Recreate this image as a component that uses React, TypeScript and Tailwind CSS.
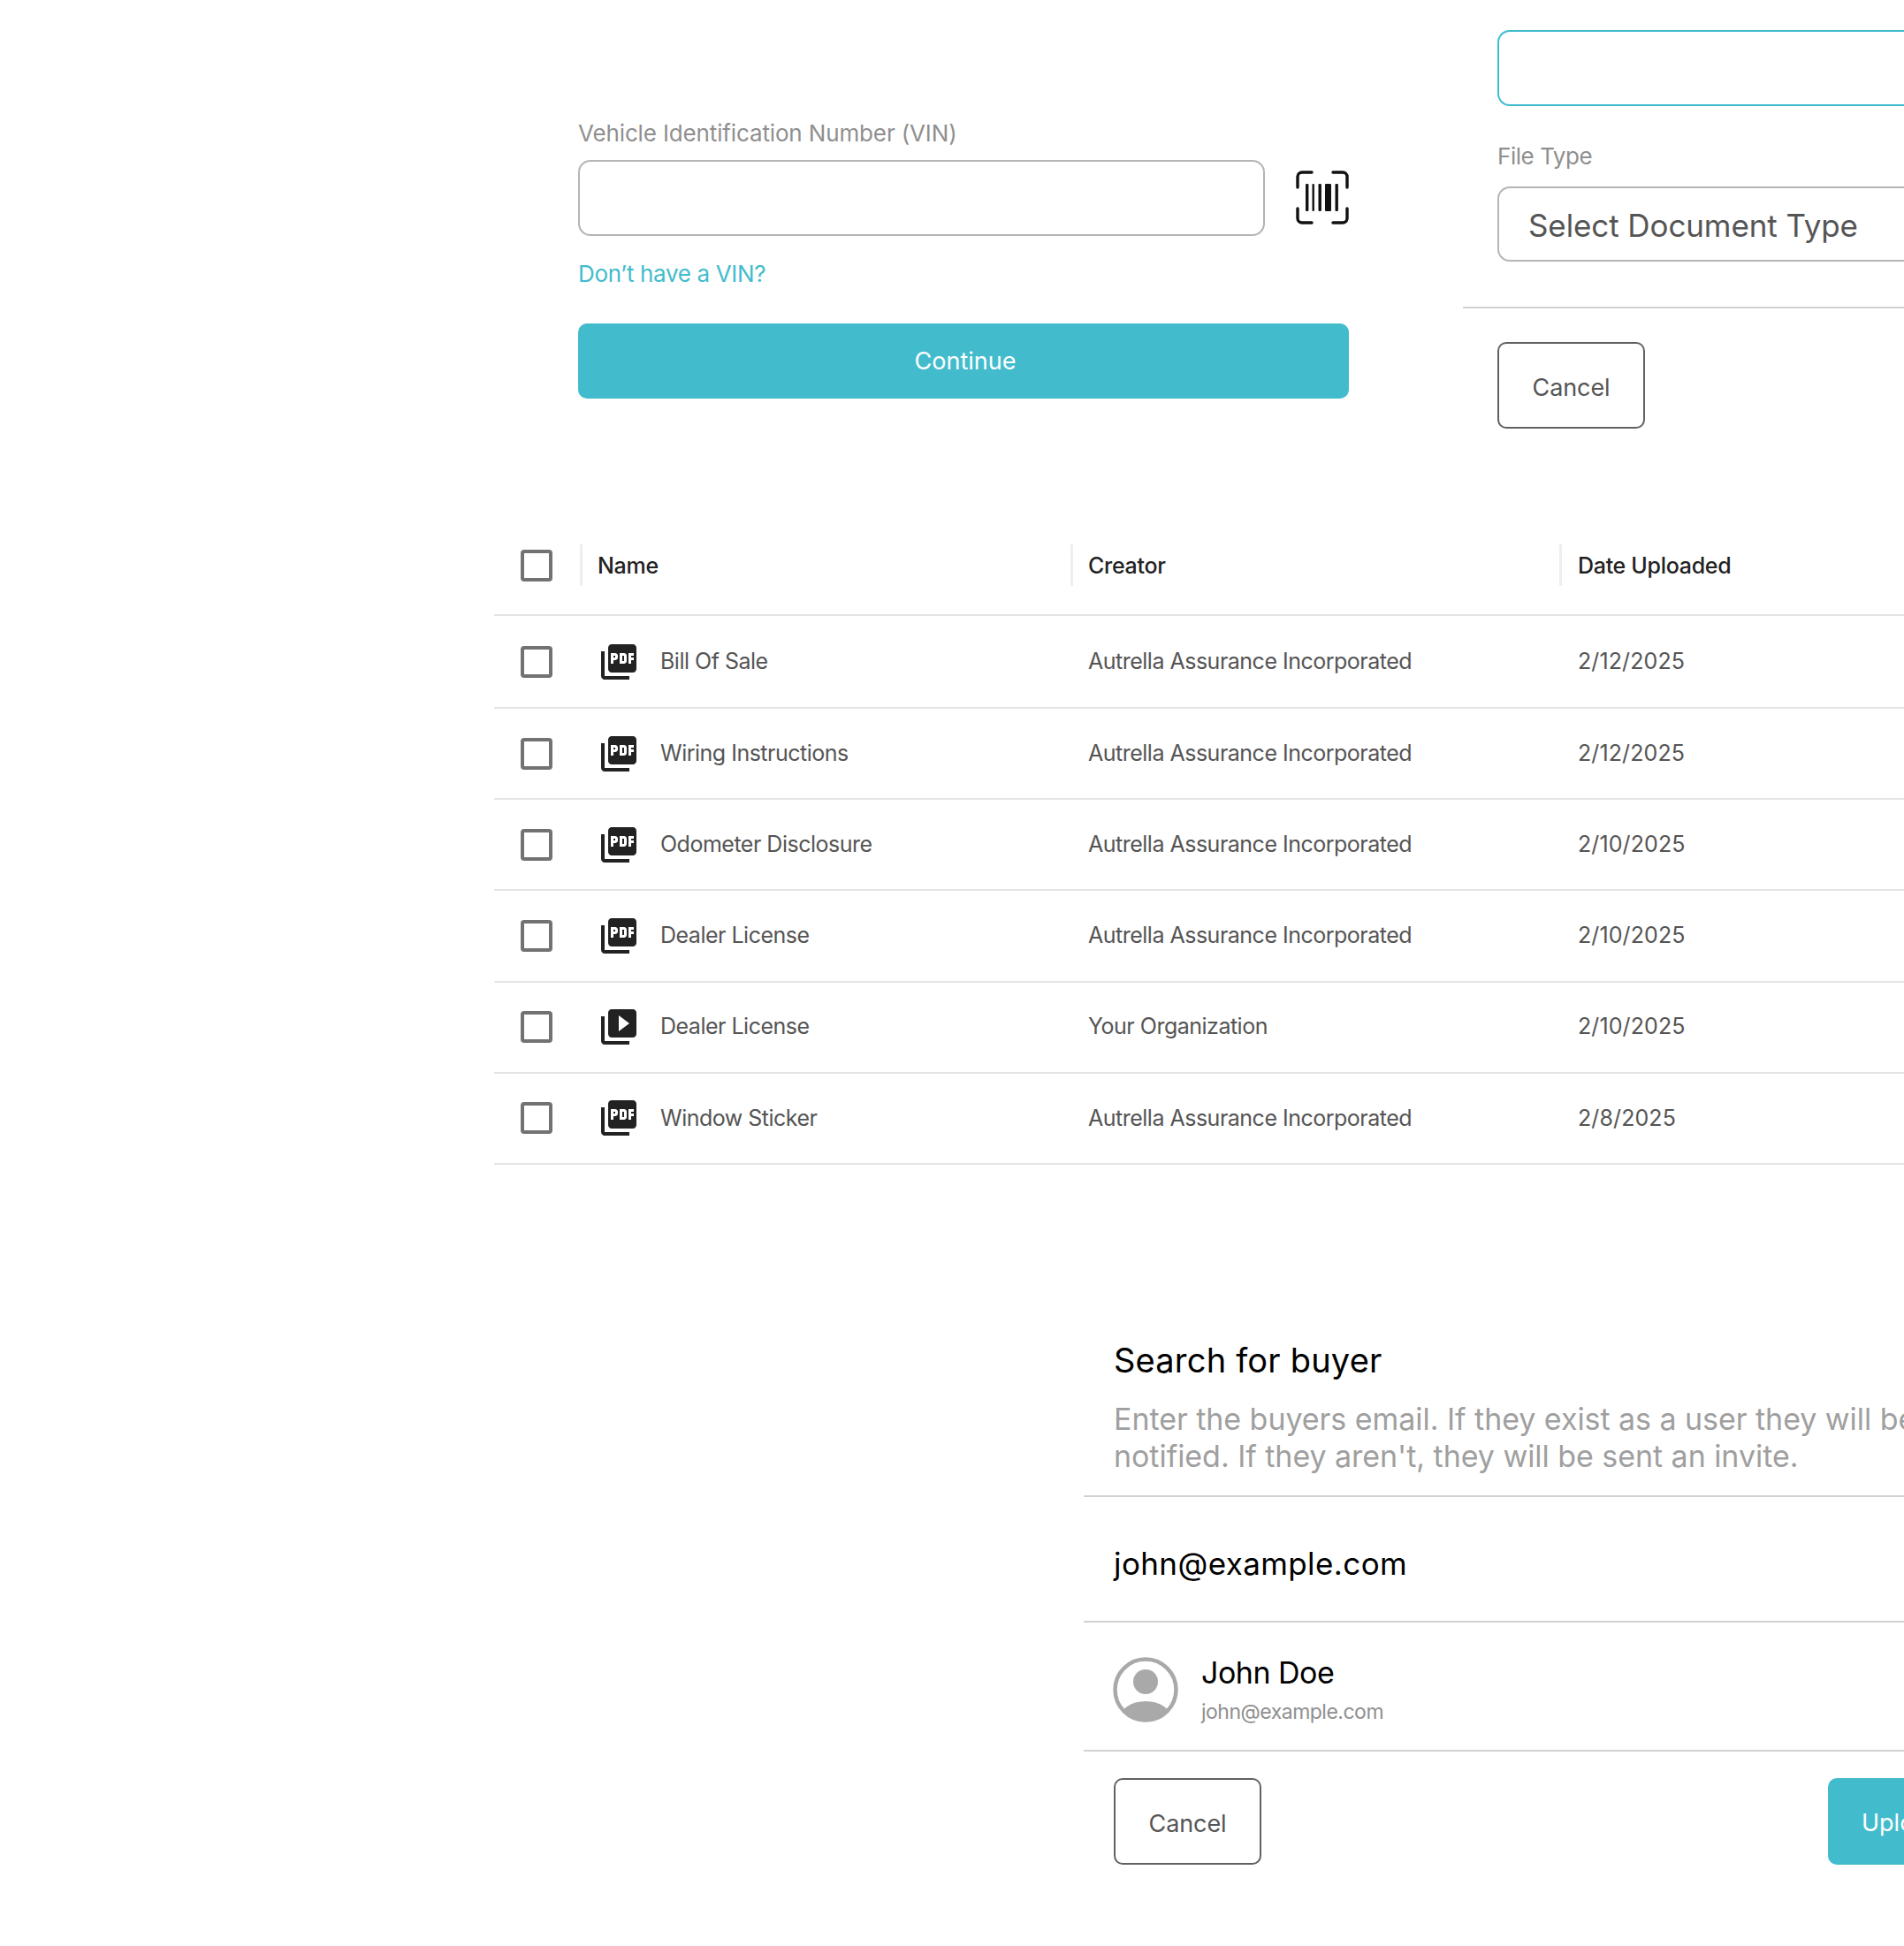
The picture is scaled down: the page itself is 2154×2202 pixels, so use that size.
import { MdPictureAsPdf, MdVideoLibrary } from "react-icons/md";

const rows = [
  { name: "Bill Of Sale", creator: "Autrella Assurance Incorporated", date: "2/12/2025", video: false },
  { name: "Wiring Instructions", creator: "Autrella Assurance Incorporated", date: "2/12/2025", video: false },
  { name: "Odometer Disclosure", creator: "Autrella Assurance Incorporated", date: "2/10/2025", video: false },
  { name: "Dealer License", creator: "Autrella Assurance Incorporated", date: "2/10/2025", video: false },
  { name: "Dealer License", creator: "Your Organization", date: "2/10/2025", video: true },
  { name: "Window Sticker", creator: "Autrella Assurance Incorporated", date: "2/8/2025", video: false },
];

function Check() {
  return <div className="ml-[30px] w-9 h-9 border-4 border-[#727272] rounded-[4px] bg-white" />;
}

function Barcode() {
  return (
    <svg width="62" height="62" viewBox="-1 1 62 62" fill="none" stroke="#111" strokeWidth="3.4" strokeLinecap="round">
      <path d="M3 20V8a5 5 0 0 1 5-5h11" />
      <path d="M43 3h11a5 5 0 0 1 5 5v12" />
      <path d="M3 44v11a5 5 0 0 0 5 5h11" />
      <path d="M43 60h11a5 5 0 0 0 5-5V44" />
      <g stroke="none" fill="#111">
        <rect x="12" y="16" width="3.4" height="31" rx="1.2" />
        <rect x="19.5" y="16" width="2.4" height="31" rx="1" />
        <rect x="26.5" y="16" width="3.4" height="31" rx="1.2" />
        <rect x="34" y="16" width="7" height="31" rx="1" />
        <rect x="45.5" y="16" width="3.4" height="31" rx="1.2" />
      </g>
    </svg>
  );
}

function Avatar() {
  return (
    <svg width="74" height="74" viewBox="0 0 74 74">
      <defs>
        <clipPath id="avatarClip">
          <circle cx="37" cy="37" r="34" />
        </clipPath>
      </defs>
      <circle cx="37" cy="37" r="34.5" fill="#fff" stroke="#a9a9a9" strokeWidth="4.5" />
      <circle cx="37" cy="28" r="14" fill="#a9a9a9" />
      <ellipse cx="37" cy="71" rx="30" ry="21" fill="#a9a9a9" clipPath="url(#avatarClip)" />
    </svg>
  );
}

function CancelButton() {
  return (
    <button className="w-[167px] h-[98px] border-2 border-[#616161] rounded-[10px] bg-white text-[#555] text-[27px] tracking-[-0.1px] pt-[7px]">
      Cancel
    </button>
  );
}

export default function App() {
  return (
    <div className="w-[2154px] h-[2202px] overflow-hidden bg-white font-['Inter','Liberation_Sans',sans-serif]">
      <section className="flex h-[584px] pl-[654px]">
        <div className="w-[872px] shrink-0 pt-[137px]">
          <div className="text-[26px] leading-7 text-[#8f8f8f] tracking-[-0.14px]">Vehicle Identification Number (VIN)</div>
          <div className="mt-4 flex items-center justify-between">
            <div className="w-[777px] h-[86px] border-2 border-[#b5b5b5] rounded-[14px]" />
            <Barcode />
          </div>
          <div className="mt-[29px] text-[26px] leading-7 text-[#42bccd] tracking-[-0.35px]">Don’t have a VIN?</div>
          <button className="mt-[42px] w-full h-[85px] rounded-[10px] bg-[#42bccd] text-white text-[27px] pl-[4px] pt-[2px]">Continue</button>
        </div>
        <div className="ml-[129px] w-[800px] shrink-0 pt-[34px]">
          <div className="pl-[39px]">
            <div className="h-[86px] border-2 border-r-0 border-[#42bccd] rounded-l-[14px]" />
            <div className="mt-[43px] text-[26px] leading-7 text-[#8f8f8f] tracking-[-0.45px]">File Type</div>
            <div className="mt-[20px] h-[85px] flex items-center pl-[33px] pt-[3px] border-2 border-r-0 border-[#b5b5b5] rounded-l-[14px] text-[#555] text-[35px] tracking-[-0.1px]">
              Select Document Type
            </div>
          </div>
          <div className="mt-[51px] h-[2px] bg-[#d2d2d2]" />
          <div className="mt-[38px] pl-[39px]">
            <CancelButton />
          </div>
        </div>
      </section>

      <section className="ml-[559px] w-[1595px]">
        <div className="grid grid-cols-[97px_555px_553px_1fr] items-center h-[113px] border-b-2 border-[#e4e4e4] text-[25px] text-[#222] font-medium tracking-[-0.3px]">
          <Check />
          <div className="h-[47px] flex items-center pl-[17px] pt-[2px] border-l-[3px] border-[#eeeeee]">Name</div>
          <div className="h-[47px] flex items-center pl-[17px] pt-[2px] border-l-[3px] border-[#eeeeee]">Creator</div>
          <div className="h-[47px] flex items-center pl-[18px] pt-[2px] border-l-[3px] border-[#eeeeee]">Date Uploaded</div>
        </div>
        {rows.map((r, i) => (
          <div
            key={i}
            className={
              i === 0
                ? "grid grid-cols-[97px_555px_553px_1fr] items-center h-[105px] border-b-2 border-[#e4e4e4] text-[25px] text-[#555] tracking-[-0.5px]"
                : "grid grid-cols-[97px_555px_553px_1fr] items-center h-[103.2px] border-b-2 border-[#e4e4e4] text-[25px] text-[#555] tracking-[-0.5px]"
            }
          >
            <Check />
            <div className="flex items-center pl-[20px] gap-[23px]">
              {r.video ? <MdVideoLibrary size={48} color="#222" /> : <MdPictureAsPdf size={48} color="#222" />}
              <span>{r.name}</span>
            </div>
            <div className="pl-5">{r.creator}</div>
            <div className="pl-[21px] tracking-[0.1px]">{r.date}</div>
          </div>
        ))}
      </section>

      <section className="ml-[1226px] mt-[200px] w-[1052px]">
        <div className="pl-[34px]">
          <div className="text-[38px] leading-10 text-black tracking-[0.2px] pt-[1px]">Search for buyer</div>
          <p className="mt-[26px] text-[34px] leading-[42px] text-[#9f9f9f] tracking-[-0.05px] whitespace-nowrap">
            Enter the buyers email. If they exist as a user they will be
            <br />
            notified. If they aren't, they will be sent an invite.
          </p>
        </div>
        <div className="mt-[23px] h-[2px] bg-[#d2d2d2]" />
        <div className="h-[140px] flex items-center pl-[34px] pt-[10px] text-[35px] tracking-[0.4px] text-black">john@example.com</div>
        <div className="h-[2px] bg-[#d2d2d2]" />
        <div className="h-[144px] flex items-center pl-[33px] pt-[8px] gap-[26px]">
          <Avatar />
          <div>
            <div className="text-[34px] leading-10 text-black tracking-[-0.5px]">John Doe</div>
            <div className="mt-[10px] text-[23px] leading-7 text-[#8f8f8f] tracking-[-0.5px]">john@example.com</div>
          </div>
        </div>
        <div className="h-[2px] bg-[#d2d2d2]" />
        <div className="pt-[30px] px-[34px] flex justify-between">
          <CancelButton />
          <button className="w-[176px] h-[98px] rounded-[10px] bg-[#42bccd] text-white text-[27px] text-left pl-[38px] pt-[5px]">
            Upload
          </button>
        </div>
      </section>
    </div>
  );
}
